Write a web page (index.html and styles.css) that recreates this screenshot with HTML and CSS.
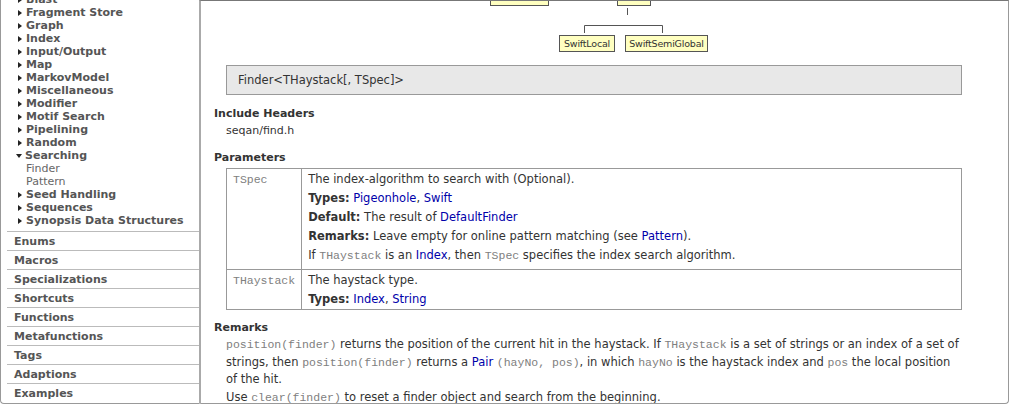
FILE: index.html
```html
<!DOCTYPE html>
<html>
<head>
<meta charset="utf-8">
<link rel="stylesheet" href="styles.css">
</head>
<body>
<div class="page">
  <nav class="sidebar">
    <ul class="groups">
      <li class="grp"><span class="tri"></span>Blast</li>
      <li class="grp"><span class="tri"></span>Fragment Store</li>
      <li class="grp"><span class="tri"></span>Graph</li>
      <li class="grp"><span class="tri"></span>Index</li>
      <li class="grp"><span class="tri"></span>Input/Output</li>
      <li class="grp"><span class="tri"></span>Map</li>
      <li class="grp"><span class="tri"></span>MarkovModel</li>
      <li class="grp"><span class="tri"></span>Miscellaneous</li>
      <li class="grp"><span class="tri"></span>Modifier</li>
      <li class="grp"><span class="tri"></span>Motif Search</li>
      <li class="grp"><span class="tri"></span>Pipelining</li>
      <li class="grp"><span class="tri"></span>Random</li>
      <li class="grp"><span class="tri open"></span>Searching</li>
      <li class="sub">Finder</li>
      <li class="sub">Pattern</li>
      <li class="grp"><span class="tri"></span>Seed Handling</li>
      <li class="grp"><span class="tri"></span>Sequences</li>
      <li class="grp"><span class="tri"></span>Synopsis Data Structures</li>
    </ul>
    <ul class="sections">
      <li>Enums</li>
      <li>Macros</li>
      <li>Specializations</li>
      <li>Shortcuts</li>
      <li>Functions</li>
      <li>Metafunctions</li>
      <li>Tags</li>
      <li>Adaptions</li>
      <li>Examples</li>
    </ul>
  </nav>
  <main class="main">
    <svg class="diagram" width="600" height="58" viewBox="0 0 600 58">
      <g fill="#ffffc0" stroke="#555" stroke-width="1">
        <rect x="276.5" y="-10.5" width="58" height="15"/>
        <rect x="403.5" y="-10.5" width="33" height="15"/>
        <rect x="345.5" y="34.5" width="55" height="16"/>
        <rect x="411.5" y="34.5" width="82" height="16"/>
      </g>
      <g fill="none" stroke="#555" stroke-width="1">
        <path d="M413.5 7 V14"/>
        <path d="M370.5 32 V24.5 H448.5 V32"/>
      </g>
      <g class="dtext" fill="#333">
        <text x="373" y="46" text-anchor="middle">SwiftLocal</text>
        <text x="452.5" y="46" text-anchor="middle">SwiftSemiGlobal</text>
      </g>
    </svg>
    <div class="sig">Finder&lt;THaystack[, TSpec]&gt;</div>
    <h3>Include Headers</h3>
    <div class="ind">seqan/find.h</div>
    <h3>Parameters</h3>
    <table class="params">
      <tr class="r1">
        <td class="pname"><code>TSpec</code></td>
        <td>
          <div>The index-algorithm to search with (Optional).</div>
          <div><b>Types:</b> <a>Pigeonhole</a>, <a>Swift</a></div>
          <div><b>Default:</b> The result of <a>DefaultFinder</a></div>
          <div><b>Remarks:</b> Leave empty for online pattern matching (see <a>Pattern</a>).</div>
          <div>If <code>THaystack</code> is an <a>Index</a>, then <code>TSpec</code> specifies the index search algorithm.</div>
        </td>
      </tr>
      <tr class="r2">
        <td class="pname"><code>THaystack</code></td>
        <td>
          <div>The haystack type.</div>
          <div><b>Types:</b> <a>Index</a>, <a>String</a></div>
        </td>
      </tr>
    </table>
    <h3 class="rem">Remarks</h3>
    <div class="ind para"><code>position(finder)</code> returns the position of the current hit in the haystack. If <code>THaystack</code> is a set of strings or an index of a set of strings, then <code>position(finder)</code> returns a <a>Pair</a> <code>(hayNo, pos)</code>, in which <code>hayNo</code> is the haystack index and <code>pos</code> the local position of the hit.</div>
    <div class="ind para">Use <code>clear(finder)</code> to reset a finder object and search from the beginning.</div>
  </main>
</div>
</body>
</html>
```

FILE: styles.css
```css
html, body {
  margin: 0;
  padding: 0;
  background: #fff;
}
body {
  font-family: "DejaVu Sans", Verdana, sans-serif;
  font-size: 11px;
  color: #333;
  overflow: hidden;
}
.page {
  display: flex;
  width: 1009px;
  height: 404px;
  overflow: hidden;
}
.sidebar {
  width: 199px;
  flex: none;
  border-left: 1px solid #999;
  border-bottom: 1px solid #999;
  border-bottom-left-radius: 4px;
  box-sizing: border-box;
  height: 404px;
  overflow: hidden;
  color: #555;
}
.groups {
  list-style: none;
  margin: -7px 0 0 0;
  padding: 0 0 4px 0;
}
.groups li {
  height: 13px;
  line-height: 13px;
  white-space: nowrap;
}
.grp {
  font-weight: bold;
  padding-left: 16px;
  display: flex;
  align-items: center;
}
.tri {
  display: inline-block;
  width: 0;
  height: 0;
  border-top: 3.5px solid transparent;
  border-bottom: 3.5px solid transparent;
  border-left: 4px solid #222;
  margin-right: 4px;
  margin-left: 1px;
}
.tri.open {
  border-left: 3.5px solid transparent;
  border-right: 3.5px solid transparent;
  border-top: 4px solid #222;
  border-bottom: 0;
  margin-left: -1px;
  margin-right: 3px;
}
.sub {
  padding-left: 25px;
  color: #666;
}
.sections {
  list-style: none;
  margin: 0 0 0 6px;
  padding: 0;
}
.sections li {
  border-top: 1px solid #bbb;
  height: 18px;
  line-height: 19px;
  font-weight: bold;
  padding-left: 7px;
}
.main {
  flex: none;
  width: 810px;
  min-width: 0;
  border-top: 1px solid #777;
  border-left: 2px solid #aaa;
  border-right: 1px solid #999;
  border-bottom: 1px solid #999;
  border-bottom-right-radius: 4px;
  box-sizing: border-box;
  height: 404px;
  padding: 0 46px 0 13px;
  overflow: hidden;
}
.diagram {
  display: block;
  overflow: visible;
}
.dtext {
  font-family: "DejaVu Sans", Verdana, sans-serif;
  font-size: 9.5px;
  letter-spacing: -0.2px;
}
.sig {
  margin: 6px 0 0 12px;
  height: 28px;
  line-height: 28px;
  background: #e8e8e8;
  border: 1px solid #999;
  padding-left: 11px;
  color: #333;
  font-size: 11.5px;
}
h3 {
  font-size: 11px;
  font-weight: bold;
  margin: 10px 0 0 0;
  line-height: 17px;
  color: #333;
}
.ind {
  margin-left: 12px;
  line-height: 17px;
}
code {
  font-family: "Liberation Mono", "Courier New", monospace;
  font-size: 11.5px;
  line-height: 1;
  color: #808080;
}
a {
  color: #00a;
}
.params {
  margin: 2px 0 0 12px;
  width: calc(100% - 12px);
  border-collapse: collapse;
  font-size: 11.5px;
}
.params td {
  border: 1px solid #999;
  vertical-align: top;
  padding: 1px 6px 2px 6px;
  line-height: 19px;
}
.params .r1 td {
  padding-bottom: 4px;
}
.params .r2 td {
  padding-bottom: 0;
}
.params td.pname {
  width: 62px;
}
.params .pname code {
  line-height: 19px;
}
.rem {
  margin-top: 9px;
}
.para {
  font-size: 11.5px;
  line-height: 17.6px;
}
```
